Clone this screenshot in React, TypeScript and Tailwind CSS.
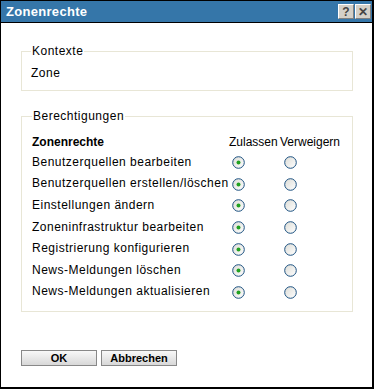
import React from "react";

const rows = [
  "Benutzerquellen bearbeiten",
  "Benutzerquellen erstellen/löschen",
  "Einstellungen ändern",
  "Zoneninfrastruktur bearbeiten",
  "Registrierung konfigurieren",
  "News-Meldungen löschen",
  "News-Meldungen aktualisieren",
];

function Radio({ checked }: { checked?: boolean }) {
  return (
    <svg width="13" height="13" viewBox="0 0 13 13">
      <defs>
        <linearGradient id="rg" x1="0" y1="0" x2="1" y2="1">
          <stop offset="0" stopColor="#dcdcd6" />
          <stop offset="1" stopColor="#ffffff" />
        </linearGradient>
      </defs>
      <circle cx="6.5" cy="6.5" r="5.8" fill="url(#rg)" stroke="#1c5180" strokeWidth="1" />
      {checked && <circle cx="6.5" cy="6.5" r="2" fill="#21a121" />}
    </svg>
  );
}

export default function App() {
  return (
    <div
      className="w-[374px] h-[389px] bg-white border border-black border-r-2 border-b-2 flex flex-col text-[12px] text-black"
      style={{ fontFamily: "'Liberation Sans', Arial, sans-serif" }}
    >
      <div className="h-[22px] bg-[#3576a9] border-b border-black flex items-center pl-[5px] pr-[1px]">
        <div className="text-white font-bold text-[13px] flex-1 tracking-[0.3px]">Zonenrechte</div>
        <div className="flex gap-[1px]">
          <div className="w-[16px] h-[15px] bg-[#d4d0c8] border border-t-white border-l-white border-r-[#808080] border-b-[#808080] flex items-center justify-center text-[#444] font-bold text-[12px] leading-none">?</div>
          <div className="w-[16px] h-[15px] bg-[#d4d0c8] border border-t-white border-l-white border-r-[#808080] border-b-[#808080] flex items-center justify-center text-[#444] font-bold text-[12px] leading-none">✕</div>
        </div>
      </div>

      <div className="flex-1 pl-[20px] pt-[19px] tracking-[0.5px]">
        <fieldset className="w-[332px] border border-[#e8e6d6] px-[9px] pb-[8px] pt-[2px]">
          <legend className="px-[1px]">Kontexte</legend>
          <div className="mt-[2px]">Zone</div>
        </fieldset>

        <fieldset className="w-[332px] border border-[#e8e6d6] mt-[16px] pl-[10px] pr-0 pb-[9px]">
          <legend className="px-[1px]">Berechtigungen</legend>
          <div className="flex items-end h-[26px]">
            <div className="flex-1 font-bold tracking-normal">Zonenrechte</div>
            <div className="w-[51px] tracking-normal whitespace-nowrap">Zulassen</div>
            <div className="w-[72px] tracking-normal whitespace-nowrap">Verweigern</div>
          </div>
          {rows.map((r) => (
            <div key={r} className="flex items-center h-[21.6px]">
              <div className="flex-1 whitespace-nowrap">{r}</div>
              <div className="w-[51px] pl-[3px] pt-[2px] flex items-center">
                <Radio checked />
              </div>
              <div className="w-[72px] pl-[4px] pt-[2px] flex items-center">
                <Radio />
              </div>
            </div>
          ))}
        </fieldset>

        <div className="flex gap-[4px] mt-[38px] tracking-normal">
          <button className="w-[76px] h-[16px] border border-[#888] bg-gradient-to-b from-[#f8f8f8] to-[#d8d8d8] font-bold text-[11px] leading-none">OK</button>
          <button className="w-[76px] h-[16px] border border-[#888] bg-gradient-to-b from-[#f8f8f8] to-[#d8d8d8] font-bold text-[11px] leading-none">Abbrechen</button>
        </div>
      </div>
    </div>
  );
}
